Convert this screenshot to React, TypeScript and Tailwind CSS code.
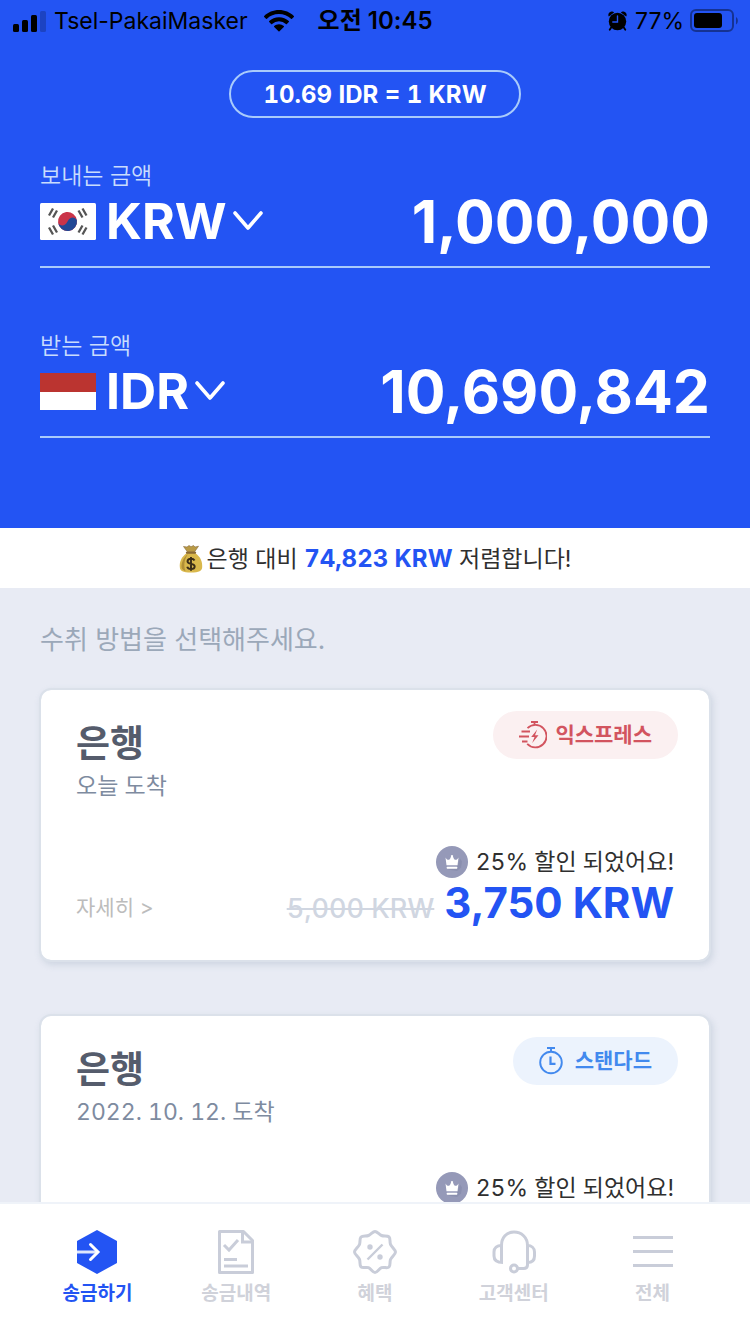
import React, { useState } from "react";

function StatusBar() {
  return (
    <div className="flex h-10 items-center justify-between px-3 pt-0.5 text-[23px] leading-8 text-black">
      <div className="flex items-center">
        <svg width="34" height="22" viewBox="0 0 34 22" aria-hidden="true">
          <rect x="1" y="14" width="6" height="8" rx="1.5" />
          <rect x="10" y="10" width="6" height="12" rx="1.5" />
          <rect x="19" y="5" width="6" height="17" rx="1.5" />
          <rect x="28" y="1" width="6" height="21" rx="1.5" opacity="0.2" />
        </svg>
        <span className="ml-2">Tsel-PakaiMasker</span>
        <svg className="ml-4" width="30" height="22" viewBox="0 0 30 22" aria-hidden="true">
          <path d="M15 0C9.2 0 4 2.3.2 5.9a.7.7 0 0 0 0 1l1.8 1.8c.3.3.7.3 1 0A17.400 17.400 0 0 1 15 4.100c4.600 0 8.800 1.700 12 4.600.3.300.7.300 1 0l1.800-1.800a.7.7 0 0 0 0-1C26 2.300 20.800 0 15 0Z" />
          <path d="M15 7.300c-3.800 0-7.200 1.400-9.800 3.800a.7.7 0 0 0 0 1l1.900 1.800c.3.300.7.300 1 0a10.200 10.200 0 0 1 13.800 0c.3.300.7.300 1 0l1.900-1.800a.7.7 0 0 0 0-1A14.400 14.400 0 0 0 15 7.300Z" />
          <path d="M15 14.300c-1.900 0-3.500.7-4.800 1.800-.3.300-.3.700 0 1l4.300 4.200c.3.300.7.300 1 0l4.300-4.200c.3-.3.300-.7 0-1A7.200 7.200 0 0 0 15 14.300Z" />
        </svg>
        <span className="ml-6 text-[24px] font-semibold">오전 10:45</span>
      </div>
      <div className="flex items-center">
        <svg width="19" height="20" viewBox="0 0 19 20" aria-hidden="true">
          <path d="M.8 5.500C-.4 3.800.8.700 3.500.500c1.200 0 2 .400 2.600 1L.8 5.500ZM18.200 5.500c1.200-1.700 0-4.800-2.700-5-1.200 0-2 .400-2.600 1l5.300 4Z" />
          <path d="M3.500 16 1.700 18.800M15.500 16l1.800 2.800" stroke="#000" strokeWidth="1.800" strokeLinecap="round" />
          <circle cx="9.500" cy="10.500" r="8.700" />
          <path d="M9.500 5v6H4.800" fill="none" stroke="#2354f3" strokeWidth="1.400" strokeLinecap="round" />
        </svg>
        <span className="ml-2">77%</span>
        <svg className="ml-1.5" width="48" height="24" viewBox="0 0 48 24" aria-hidden="true">
          <rect x="1" y="1" width="42" height="21" rx="5" fill="none" stroke="#000" strokeOpacity="0.4" strokeWidth="2" />
          <rect x="4" y="4" width="28" height="15" rx="3" />
          <path d="M46 8c2.500 1.500 2.500 6 0 7.500V8Z" opacity="0.4" />
        </svg>
      </div>
    </div>
  );
}

function KoreaFlag() {
  return (
    <svg width="56" height="37" viewBox="0 0 56 37" aria-hidden="true">
      <rect width="56" height="37" rx="1.500" fill="#fff" />
      <g transform="rotate(-8 27.500 18.500)">
        <circle cx="27.500" cy="18.500" r="9.500" fill="#ca3449" />
        <path d="M18 18.500c1.500 4 6.500 4.500 9.500 0s8-4 9.500 0a9.500 9.500 0 0 1-19 0Z" fill="#224896" />
      </g>
      <g stroke="#555" strokeWidth="2.300">
        <path d="m9 12.500 4-7M13 14.500l4-7" />
        <path d="m46.500 12.500-4-7M42.500 14.500l-4-7" />
        <path d="m9 24.500 4 7M13 22.500l4 7" />
        <path d="m46.500 24.500-4 7M42.500 22.500l-4 7" />
      </g>
    </svg>
  );
}

function IndonesiaFlag() {
  return (
    <svg width="56" height="37" viewBox="0 0 56 37" aria-hidden="true">
      <rect width="56" height="37" fill="#fff" />
      <rect width="56" height="19" fill="#bb3430" />
    </svg>
  );
}

type AmountFieldProps = {
  id: string;
  label: string;
  currency: string;
  initial: string;
  flag: React.ReactNode;
};

function AmountField({ id, label, currency, initial, flag }: AmountFieldProps) {
  const [amount, setAmount] = useState(initial);
  return (
    <div className="border-b-2 border-[#a9cbfb] pb-4">
      <label htmlFor={id} className="block text-[23px] leading-8 font-[350] text-[#c9dcfd]">
        {label}
      </label>
      <div className="flex h-[58px] items-center">
        <div className="flex shrink-0 items-center">
          {flag}
          <select
            aria-label={`${label} 통화`}
            defaultValue={currency}
            className="field-sizing-content ml-2.5 appearance-none bg-transparent text-[50px] leading-[58px] font-bold text-white outline-none"
          >
            <option value={currency}>{currency}</option>
          </select>
          <svg className="ml-1.5" width="30" height="20" viewBox="0 0 30 20" aria-hidden="true">
            <path d="m2 2 13 15L28 2" fill="none" stroke="#fff" strokeWidth="3.600" strokeLinecap="round" strokeLinejoin="round" />
          </svg>
        </div>
        <input
          id={id}
          inputMode="numeric"
          value={amount}
          onChange={(e) => setAmount(e.target.value)}
          className="w-0 min-w-0 flex-1 bg-transparent text-right text-[59px] leading-[58px] font-bold text-white outline-none"
        />
      </div>
    </div>
  );
}

function MoneyBag() {
  return (
    <svg width="24" height="28" viewBox="0 0 24 28" aria-hidden="true">
      <path d="M8 8C2 12 .500 17 .800 22c.200 4 3 5.500 11.200 5.500S23 26 23.200 22C23.500 17 22 12 16 8Z" fill="#d9b84c" />
      <path d="M9 9c-5 4-6.500 9-6.500 13 0 2 2 3.500 4 4C4 20 6 13 9 9Z" fill="#b18f35" />
      <path d="M8.500 7 4.500 1.500 8 2l2-1.500 2 1.200L14.500.500 16 2l3.500-.800L15.500 7Z" fill="#b99a45" stroke="#86693a" strokeWidth=".6" />
      <path d="M7.800 7.800h8.400" stroke="#8a6a35" strokeWidth="2" strokeLinecap="round" />
      <path d="M15.500 15.500c-.6-1.300-1.900-1.800-3.500-1.800-2 0-3.500.9-3.500 2.500 0 3.600 7.200 1.700 7.200 5.200 0 1.700-1.600 2.600-3.700 2.600-1.900 0-3.400-.8-3.800-2.300M12 12v13.800" fill="none" stroke="#3a2d18" strokeWidth="1.900" />
    </svg>
  );
}

function ExpressIcon() {
  return (
    <svg width="28" height="28" viewBox="0 0 28 28" fill="none" stroke="#d2545f" strokeWidth="1.800" aria-hidden="true">
      <path d="M12 1h7M15.500 1v3M8.500 7.200A11.200 11.200 0 1 1 8.200 22.800" />
      <path d="M2.500 10.500H11M0 15.500h10M3 20.500h5.500" />
      <path d="m18.200 8.500-6 7.500h3.300l-2.300 6 6.300-7.700H16l2.200-5.800Z" fill="#d2545f" stroke="none" />
    </svg>
  );
}

function StandardIcon() {
  return (
    <svg width="24" height="28" viewBox="0 0 24 28" fill="none" stroke="#4289ee" strokeWidth="1.900" aria-hidden="true">
      <path d="M8 1h8M12 1v3" />
      <circle cx="12" cy="15.500" r="10.800" />
      <path d="M11.500 9.500v7.300h5" strokeWidth="2.200" />
    </svg>
  );
}

function CrownBadge() {
  return (
    <svg width="32" height="32" viewBox="0 0 32 32" aria-hidden="true">
      <circle cx="16" cy="16" r="16" fill="#9599b8" />
      <path d="m12 23.500 9-2 3-9 2 3-1 6-4 3.500Z" fill="#8388a8" opacity=".6" />
      <path d="M9.500 11.500c1 2 2.300 2.700 3.600 2.200.8-.5 1.500-1.700 1.900-3.200a1.100 1.100 0 1 1 2 0c.4 1.500 1.100 2.700 1.900 3.200 1.300.5 2.600-.2 3.600-2.200L21.500 19.300h-11Z" fill="#fff" />
      <rect x="10.800" y="20.700" width="10.400" height="2" rx=".5" fill="#fff" />
    </svg>
  );
}

function DeliveryCard({ arrival, express }: { arrival: string; express?: boolean }) {
  return (
    <article className="-mx-px rounded-xl border-2 border-[#dbe1ea] bg-white bg-clip-padding px-[35px] pt-[21px] pb-[30px] shadow-[2px_3px_6px_rgba(150,165,185,0.3)]">
      <div className="flex items-start justify-between">
        <div className="pt-2.5">
          <h2 className="text-[37px] leading-[46px] font-bold text-[#555c6c]">은행</h2>
          <p className="text-[23px] leading-[38px] text-[#7e8b9f] tabular-nums">{arrival}</p>
        </div>
        {express ? (
          <span className="-mr-1 flex h-12 items-center gap-2 rounded-full bg-[#fbf0f1] px-[26px] text-[21px] leading-8 font-bold text-[#d2545f]">
            <ExpressIcon />
            익스프레스
          </span>
        ) : (
          <span className="-mr-1 flex h-12 items-center gap-3 rounded-full bg-[#ecf3fd] px-[26px] text-[21px] leading-8 font-bold text-[#4289ee]">
            <StandardIcon />
            스탠다드
          </span>
        )}
      </div>
      <div className="mt-[41px] flex items-center justify-end gap-2 text-[23px] leading-8 text-[#2f2f2f] tabular-nums">
        <CrownBadge />
        25% 할인 되었어요!
      </div>
      <div className="flex items-center justify-between">
        <a href="#details" className="pt-2 text-[21px] leading-8 text-[#bcbcbc]">
          자세히 &gt;
        </a>
        <p className="flex items-baseline gap-2.5">
          <del className="text-[27px] font-medium text-[#d0d6e1] tabular-nums">5,000 KRW</del>
          <strong className="text-[42px] leading-[50px] font-bold text-[#2354f3]">3,750 KRW</strong>
        </p>
      </div>
    </article>
  );
}

const iconProps = {
  width: 44,
  height: 44,
  viewBox: "0 0 44 44",
  fill: "none",
  stroke: "#c9cdd9",
  strokeWidth: 3,
  "aria-hidden": true,
} as const;

const tabs = [
  {
    label: "송금하기",
    active: true,
    icon: (
      <svg {...iconProps}>
        <path d="M22 0 42 11v22L22 44 2 33V11Z" fill="#2354f3" stroke="none" />
        <path d="M2 22h20" stroke="#dfe7fd" />
        <path d="m15.500 14.500 7.500 7.500-7.500 7.500" stroke="#fff" strokeLinecap="round" />
      </svg>
    ),
  },
  {
    label: "송금내역",
    active: false,
    icon: (
      <svg {...iconProps}>
        <path d="M5.500 1.500h24l9 9v32h-33Z" strokeLinejoin="round" />
        <path d="M28.500 1.500v10.500h10M10 15l5 5 9-10M10 29.500h13M10 36h24" />
      </svg>
    ),
  },
  {
    label: "혜택",
    active: false,
    icon: (
      <svg {...iconProps}>
        <path
          d="M22 1.500c2.200 0 4 3 6.500 4s5.800-.300 7.500 1.400.500 5 1.500 7.500 5 5.200 5 7.600-4 5-5 7.500.200 5.800-1.500 7.500-5-.300-7.500.700-4.300 4.800-6.500 4.800-4-3.800-6.500-4.800-5.800.900-7.500-.800-.500-5-1.500-7.500-5-5.100-5-7.400 4-5 5-7.500-.200-5.800 1.500-7.500 5-.500 7.500-1.500 4.300-4 6.500-4Z"
          strokeLinejoin="round"
        />
        <path d="m14.500 29.500 15-15" strokeWidth="2.400" />
        <circle cx="17" cy="17" r="2.700" fill="#c9cdd9" stroke="none" />
        <circle cx="27" cy="27" r="2.700" fill="#c9cdd9" stroke="none" />
      </svg>
    ),
  },
  {
    label: "고객센터",
    active: false,
    icon: (
      <svg {...iconProps}>
        <path d="M9.500 32.500V15.500C9.500 7.500 14.500 2 22 2s13.500 5.500 13.500 13.500v19.500c0 2.500-1.500 3.500-4 3.500H26" />
        <path d="M9.500 15.500C5 15.500 2 18 2 22v4c0 4 3 6.500 9 6.500M35.500 15.500c4 0 7 2.500 7 6.500v4c0 4-2.500 6.500-7 6.500" />
        <circle cx="22" cy="38.500" r="3.500" />
      </svg>
    ),
  },
  {
    label: "전체",
    active: false,
    icon: (
      <svg {...iconProps}>
        <path d="M2 7.500h40M2 21.500h40M2 35.500h40" />
      </svg>
    ),
  },
];

export default function App() {
  return (
    <div className="flex h-screen flex-col bg-[#e8ebf4] font-['Inter','Noto_Sans_CJK_KR',sans-serif]">
      <main className="min-h-0 flex-1 overflow-y-auto [scrollbar-width:none]">
        <header className="bg-[#2354f3]">
          <StatusBar />
          <div className="px-10 pt-[30px] pb-[90px]">
            <p className="mx-auto flex h-12 w-fit items-center rounded-full border-2 border-[#a9cbfb] px-8 pt-0.5 text-[24px] leading-8 font-bold text-white tabular-nums">
              10.69 IDR = 1 KRW
            </p>
            <div className="mt-[42px] flex flex-col gap-[62px]">
              <AmountField id="send" label="보내는 금액" currency="KRW" initial="1,000,000" flag={<KoreaFlag />} />
              <AmountField id="receive" label="받는 금액" currency="IDR" initial="10,690,842" flag={<IndonesiaFlag />} />
            </div>
          </div>
        </header>
        <div className="flex h-[60px] items-center justify-center gap-1 bg-white pt-0.5 text-[23px] leading-8 text-[#2f2f2f]">
          <MoneyBag />
          <p>
            은행 대비 <strong className="text-[24px] font-bold text-[#2354f3] tabular-nums">74,823 KRW</strong> 저렴합니다!
          </p>
        </div>
        <section className="px-10 pt-8 pb-10">
          <h1 className="text-[26px] leading-10 text-[#9ba8b9]">수취 방법을 선택해주세요.</h1>
          <div className="mt-7 flex flex-col gap-[52px]">
            <DeliveryCard arrival="오늘 도착" express />
            <DeliveryCard arrival="2022. 10. 12. 도착" />
          </div>
        </section>
      </main>
      <nav className="grid grid-cols-5 border-t-2 border-[#eff3f9] bg-white px-7 pt-[26px] pb-7">
        {tabs.map((tab) => (
          <a
            key={tab.label}
            href={`#${tab.label}`}
            aria-current={tab.active ? "page" : undefined}
            className={
              tab.active
                ? "flex flex-col items-center gap-2 text-[19px] leading-6 font-bold text-[#2354f3]"
                : "flex flex-col items-center gap-2 text-[19px] leading-6 font-bold text-[#d0d2da]"
            }
          >
            {tab.icon}
            {tab.label}
          </a>
        ))}
      </nav>
    </div>
  );
}
